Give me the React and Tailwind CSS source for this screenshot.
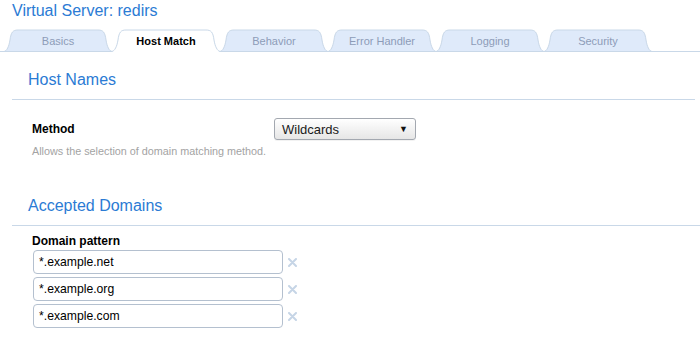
const tabs = ['Basics', 'Host Match', 'Behavior', 'Error Handler', 'Logging', 'Security'];
const domains = ['*.example.net', '*.example.org', '*.example.com'];

function Tab({ label, active }) {
  return (
    <div className={`relative w-[110px] h-[23px] -mb-px -ml-[2px] first:ml-0 flex items-center justify-center ${active ? 'z-10' : ''}`}>
      <svg className="absolute inset-0" width="110" height="23" viewBox="0 0 110 23">
        {active ? (
          <>
            <path d="M0,23 C4,23 6,17 7,11 C8,3 10,1 15,1 L95,1 C100,1 102,3 103,11 C104,17 106,23 110,23 Z" fill="#ffffff" />
            <path d="M0,22.5 C4,22.5 6,17 7,11 C8,3 10,1 15,1 L95,1 C100,1 102,3 103,11 C104,17 106,22.5 110,22.5" fill="none" stroke="#c9d8e8" strokeWidth="1" />
          </>
        ) : (
          <path d="M0.5,22.5 C4,22.5 6,17 7,11 C8,3 10,1 15,1 L95,1 C100,1 102,3 103,11 C104,17 106,22.5 109.5,22.5 Z" fill="#dfeafa" stroke="#c9d8e8" strokeWidth="1" />
        )}
      </svg>
      <span className={`relative text-[11px] leading-[13px] pt-px ${active ? 'font-bold text-black' : 'text-[#8d9cb8]'}`}>
        {label}
      </span>
    </div>
  );
}

function SectionTitle({ children, className = '' }) {
  return (
    <div className={`ml-[12px] px-[16px] pb-[9px] border-b border-[#c9d8e8] ${className}`}>
      <h2 className="text-[16px] leading-[20px] text-[#2b7bd4]">{children}</h2>
    </div>
  );
}

export default function App() {
  return (
    <div className="w-[700px] h-[338px] bg-white overflow-hidden font-['Liberation_Sans',Arial,sans-serif]">
      <h1 className="px-[12px] text-[16px] leading-[22px] text-[#2b7bd4]">Virtual Server: redirs</h1>

      <div className="mt-[7px] flex h-[23px] pl-[3px] border-b border-[#c9d8e8]">
        {tabs.map((t) => (
          <Tab key={t} label={t} active={t === 'Host Match'} />
        ))}
      </div>

      <SectionTitle className="mt-[18px] mr-[5px]">Host Names</SectionTitle>

      <div className="mt-[18px] pl-[32px] flex items-center h-[22px]">
        <div className="w-[242px] text-[12px] leading-[14px] font-bold text-black">Method</div>
        <div className="w-[142px] h-[22px] flex items-center justify-between pl-[7px] pr-[7px] rounded-[3px] border border-[#a3a8b0] bg-gradient-to-b from-white to-[#e6e6e6] shadow-[0_1px_0_rgba(0,0,0,0.05)]">
          <span className="text-[13px] leading-[15px] text-[#1a1a1a]">Wildcards</span>
          <span className="text-[9px] leading-[10px] text-[#111]">▼</span>
        </div>
      </div>

      <p className="mt-[5px] pl-[32px] text-[10.8px] leading-[13px] text-[#a3a3a3]">
        Allows the selection of domain matching method.
      </p>

      <SectionTitle className="mt-[38px] pb-[8px]">Accepted Domains</SectionTitle>

      <div className="mt-[8px] pl-[32px]">
        <div className="text-[12px] leading-[14px] font-bold text-black">Domain pattern</div>
        <div className="mt-[2px] flex flex-col gap-[3px]">
          {domains.map((d) => (
            <div key={d} className="flex items-center">
              <div className="ml-px w-[250px] h-[24px] flex items-center px-[5px] rounded-[4px] border border-[#b4c0cf] bg-white">
                <span className="text-[12.2px] leading-[15px] text-black">{d}</span>
              </div>
              <svg className="ml-[5px]" width="9" height="9" viewBox="0 0 9 9">
                <path d="M1,1 L8,8 M8,1 L1,8" stroke="#c6d5e6" strokeWidth="2" strokeLinecap="round" />
              </svg>
            </div>
          ))}
        </div>
      </div>
    </div>
  );
}
